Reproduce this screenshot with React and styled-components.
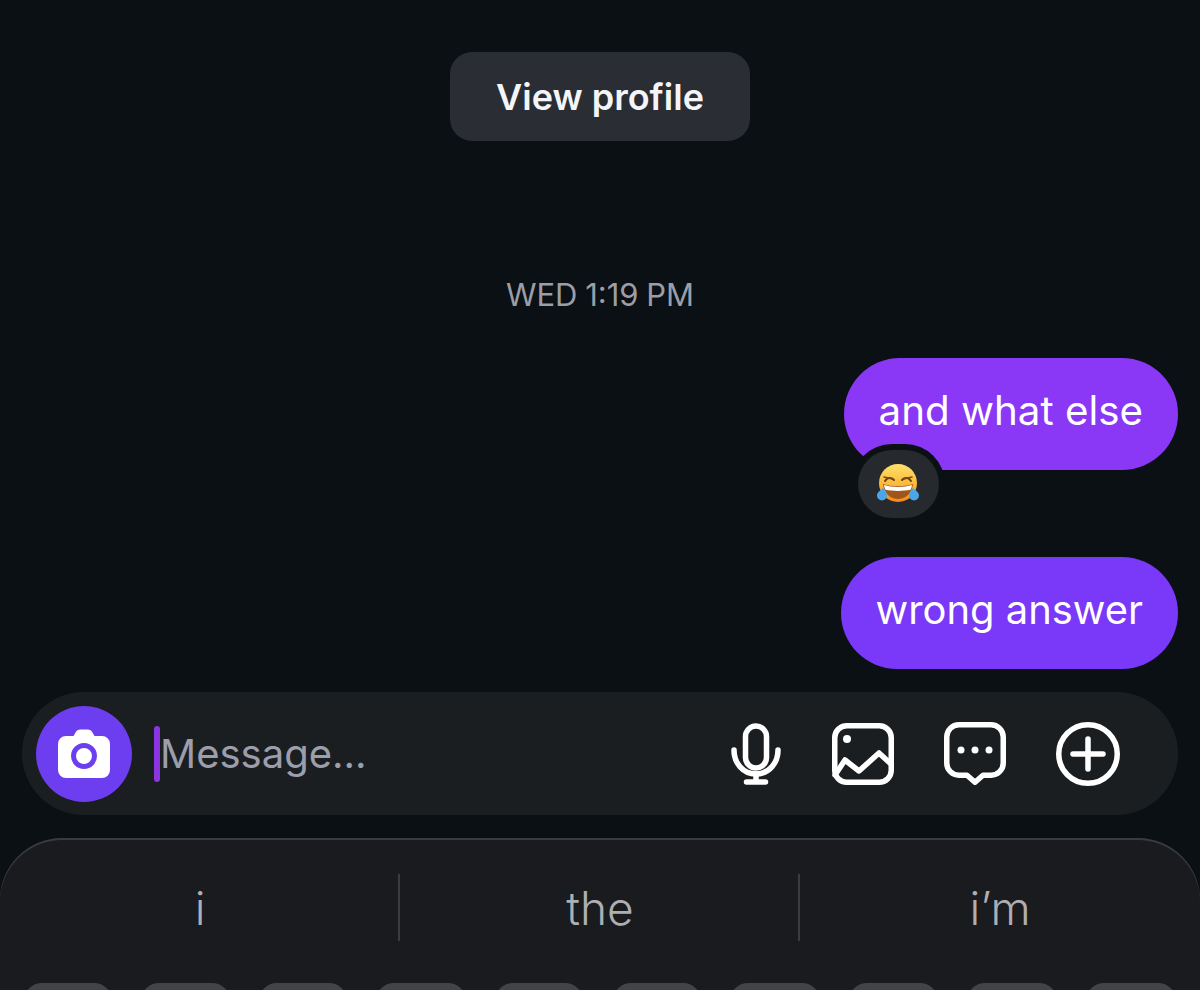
import React from "react";
import styled, { createGlobalStyle } from "styled-components";

const GlobalStyle = createGlobalStyle`
  * { box-sizing: border-box; }
  html, body { margin: 0; padding: 0; background: #0b1014; }
  body { font-family: Inter, "Liberation Sans", sans-serif; }
`;

const KEY_WIDTHS = [88, 89, 88, 90, 88, 88, 90, 89, 90, 90];

function LaughEmoji() {
  return (
    <svg width="44" height="40" viewBox="0 0 44 40">
      <defs>
        <linearGradient id="face" x1="0" y1="0" x2="0" y2="1">
          <stop offset="0" stopColor="#fde169" />
          <stop offset="0.55" stopColor="#fbb93a" />
          <stop offset="1" stopColor="#f08a1c" />
        </linearGradient>
      </defs>
      <circle cx="22" cy="19" r="19" fill="url(#face)" />
      <path d="M9 17c2-3.500 6-4 9-1M35 17c-2-3.500-6-4-9-1" fill="none" stroke="#6b3d12" strokeWidth="2" strokeLinecap="round" />
      <path d="M8 13l9 2M36 13l-9 2" fill="none" stroke="#7a4a18" strokeWidth="1.600" strokeLinecap="round" />
      <path d="M7 20c9 3 21 3 30 0c-1 10-8 15-15 15s-14-5-15-15z" fill="#a0561a" />
      <path d="M8 21c8 2.500 20 2.500 28 0c-.3 2.200-.8 3.600-1.500 4.800c-7 1.500-18 1.500-25 0c-.7-1.200-1.200-2.600-1.500-4.800z" fill="#fff" />
      <path d="M7 24c-2.500 2.500-6 4-6 7.500a5 5 0 0 0 10 0c0-3-2-5.500-4-7.500z" fill="#4aa6e8" />
      <path d="M37 24c2.500 2.500 6 4 6 7.500a5 5 0 0 1-10 0c0-3 2-5.500 4-7.500z" fill="#4aa6e8" />
    </svg>
  );
}

function CameraIcon() {
  return (
    <svg width="52" height="50" viewBox="0 0 52 50">
      <path
        d="M8 7h7.500l2-3.500c1-2 2.500-3 5-3h7c2.500 0 4 1 5 3l2 3.500H44a8 8 0 0 1 8 8V41a8 8 0 0 1-8 8H8a8 8 0 0 1-8-8V15a8 8 0 0 1 8-8z"
        fill="#fff"
      />
      <circle cx="26" cy="27" r="10.500" fill="none" stroke="#6d3df0" strokeWidth="5" />
    </svg>
  );
}

function MicIcon() {
  return (
    <svg width="52" height="62" viewBox="0 0 52 62" fill="none" stroke="#fff" strokeWidth="5.500" strokeLinecap="round">
      <rect x="15.500" y="3" width="21" height="42" rx="10.500" />
      <path d="M4 27c0 13 9 24 22 24s22-11 22-24" />
      <path d="M26 51v8M16.500 59h19" />
    </svg>
  );
}

function ImageIcon() {
  return (
    <svg width="62" height="62" viewBox="0 0 62 62" fill="none" stroke="#fff" strokeWidth="5.500" strokeLinecap="round" strokeLinejoin="round">
      <rect x="2.750" y="2.750" width="56.500" height="56.500" rx="12" />
      <path d="M3 52l10-15l14 11l20-18l12 11" />
      <circle cx="15" cy="16" r="4" fill="#fff" stroke="none" />
    </svg>
  );
}

function ChatIcon() {
  return (
    <svg width="62" height="63" viewBox="0 0 62 63" fill="none" stroke="#fff" strokeWidth="5.500" strokeLinejoin="round">
      <path d="M15 2.750h32a12.250 12.250 0 0 1 12.250 12.250v26a12.250 12.250 0 0 1-12.250 12.250h-8l-8 7l-8-7h-8a12.250 12.250 0 0 1-12.250-12.250v-26a12.250 12.250 0 0 1 12.250-12.250z" />
      <circle cx="17" cy="28" r="3.500" fill="#fff" stroke="none" />
      <circle cx="31" cy="28" r="3.500" fill="#fff" stroke="none" />
      <circle cx="45" cy="28" r="3.500" fill="#fff" stroke="none" />
    </svg>
  );
}

function PlusIcon() {
  return (
    <svg width="64" height="64" viewBox="0 0 64 64" fill="none" stroke="#fff" strokeWidth="5.500" strokeLinecap="round">
      <circle cx="32" cy="32" r="29.250" />
      <path d="M32 17v30M17 32h30" />
    </svg>
  );
}

export default function App() {
  return (
    <Page>
      <GlobalStyle />
      <ProfileButton>View profile</ProfileButton>
      <TimeStamp>WED 1:19 PM</TimeStamp>
      <Thread>
        <Bubble $tone="#8a38f5" $size="40.3px">
          and what else
          <Reaction>
            <LaughEmoji />
          </Reaction>
        </Bubble>
        <Bubble $tone="#7a38f8" $size="39.9px">wrong answer</Bubble>
      </Thread>
      <Composer>
        <CameraButton>
          <CameraIcon />
        </CameraButton>
        <Caret />
        <Placeholder>Message...</Placeholder>
        <ComposerIcons>
          <MicIcon />
          <ImageIcon />
          <ChatIcon />
          <PlusIcon />
        </ComposerIcons>
      </Composer>
      <Keyboard>
        <Suggestions>
          <Suggestion>i</Suggestion>
          <Suggestion>the</Suggestion>
          <Suggestion>i’m</Suggestion>
        </Suggestions>
        <KeyRow>
          {KEY_WIDTHS.map((w, i) => (
            <Key key={i} style={{ width: w }} />
          ))}
        </KeyRow>
      </Keyboard>
    </Page>
  );
}

const Page = styled.div`
  width: 1200px;
  height: 990px;
  overflow: hidden;
  background: #0b1014;
  display: flex;
  flex-direction: column;
  align-items: center;
`;

const ProfileButton = styled.div`
  width: 300px;
  height: 89px;
  margin-top: 52px;
  flex-shrink: 0;
  border-radius: 22px;
  background: #2a2d34;
  color: #f4f5f8;
  font-size: 36px;
  font-weight: 600;
  display: flex;
  align-items: center;
  justify-content: center;
`;

const TimeStamp = styled.div`
  margin-top: 136px;
  height: 36px;
  line-height: 36px;
  flex-shrink: 0;
  color: #9a9ea8;
  font-size: 31px;
  font-weight: 400;
  word-spacing: -1px;
`;

const Thread = styled.div`
  width: 100%;
  margin-top: 45px;
  padding-right: 22px;
  flex-shrink: 0;
  display: flex;
  flex-direction: column;
  align-items: flex-end;
  gap: 87px;
`;

const Bubble = styled.div`
  position: relative;
  height: 112px;
  padding: 0 35px 8px;
  border-radius: 56px;
  background: ${(p) => p.$tone};
  color: #fff;
  font-size: ${(p) => p.$size};
  display: flex;
  align-items: center;
`;

const Reaction = styled.div`
  position: absolute;
  left: 14px;
  top: 92px;
  width: 81px;
  height: 68px;
  border-radius: 34px;
  background: #26292d;
  box-shadow: 0 0 0 6px #0b1014;
  display: flex;
  align-items: center;
  justify-content: center;
`;

const Composer = styled.div`
  width: 1156px;
  height: 123px;
  margin-top: 23px;
  padding: 0 58px 0 14px;
  border-radius: 62px;
  background: #1b1e21;
  display: flex;
  align-items: center;
  flex-shrink: 0;
`;

const CameraButton = styled.div`
  width: 96px;
  height: 96px;
  border-radius: 50%;
  background: #6d3df0;
  display: flex;
  align-items: center;
  justify-content: center;
  flex-shrink: 0;
`;

const Caret = styled.div`
  width: 6px;
  height: 56px;
  margin-left: 22px;
  border-radius: 3px;
  background: #8a35e0;
`;

const Placeholder = styled.div`
  color: #9c9eac;
  font-size: 40px;
  flex: 1;
`;

const ComposerIcons = styled.div`
  display: flex;
  align-items: center;
  gap: 50px;

  svg {
    display: block;
    flex-shrink: 0;
  }
`;

const Keyboard = styled.div`
  width: 1200px;
  height: 200px;
  margin-top: 23px;
  flex-shrink: 0;
  border-radius: 62px 62px 0 0;
  background: #1a1b1e;
  box-shadow: inset 0 2px 0 #383b40;
`;

const Suggestions = styled.div`
  height: 145px;
  padding-top: 36px;
  display: flex;
  align-items: flex-start;
`;

const Suggestion = styled.div`
  flex: 0 0 400px;
  height: 67px;
  color: #aeafb3;
  font-size: 46px;
  font-weight: 350;
  display: flex;
  align-items: center;
  justify-content: center;

  &:not(:last-child) {
    padding-left: 2px;
    border-right: 2px solid #3a3c40;
  }
`;

const KeyRow = styled.div`
  padding: 0 24px;
  display: flex;
  justify-content: space-between;
`;

const Key = styled.div`
  height: 60px;
  border-radius: 18px;
  background: #434447;
`;
